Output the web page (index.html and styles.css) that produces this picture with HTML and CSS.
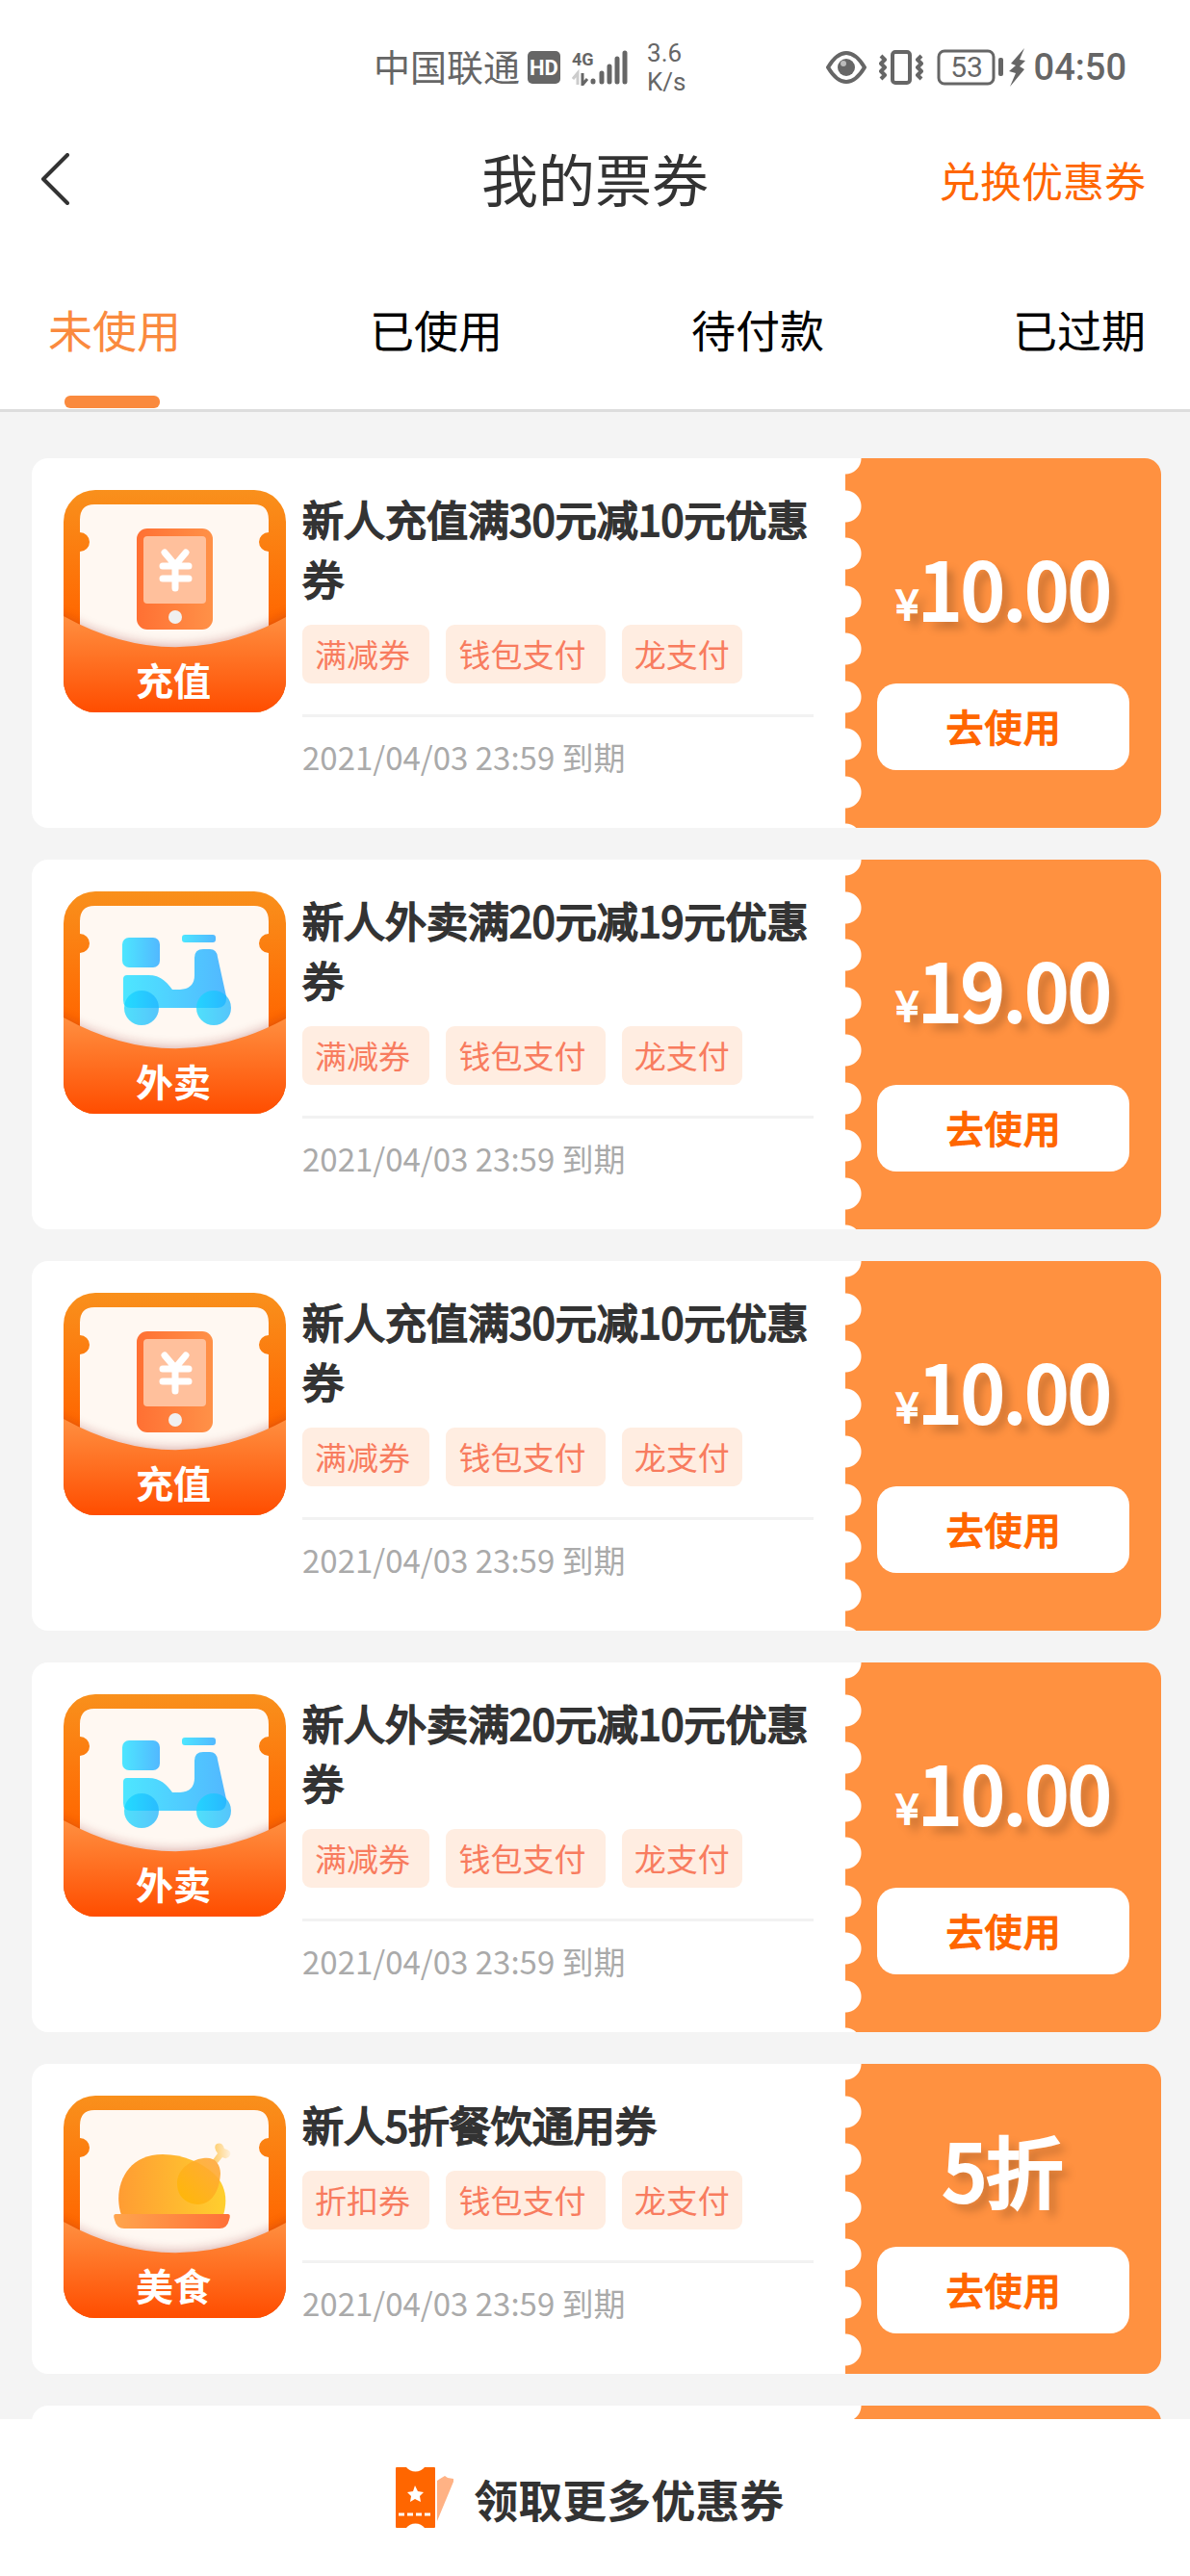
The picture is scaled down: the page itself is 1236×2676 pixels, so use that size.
FILE: index.html
```html
<!DOCTYPE html>
<html lang="zh-CN">
<head>
  <meta charset="UTF-8" />
  <meta name="viewport" content="width=device-width, initial-scale=1.0" />
  <title>我的票券</title>
  <link rel="stylesheet" href="styles.css">
</head>
<body>

<!-- Shared drawings for the coupon icons -->
<svg class="sprite" aria-hidden="true">
  <defs>
    <linearGradient id="frameFill" x1="0" y1="0" x2="0" y2="1">
      <stop offset="0" stop-color="#f9901c" />
      <stop offset="0.6" stop-color="#ff6600" />
    </linearGradient>
    <linearGradient id="pocketFill" x1="0" y1="0" x2="0" y2="1">
      <stop offset="0" stop-color="#ff8f40" />
      <stop offset="1" stop-color="#ff4d00" />
    </linearGradient>
    <linearGradient id="phoneFill" x1="0" y1="0" x2="1" y2="0">
      <stop offset="0" stop-color="#ff7033" />
      <stop offset="1" stop-color="#ff9148" />
    </linearGradient>
    <linearGradient id="bikeFill" x1="0" y1="0" x2="1" y2="0">
      <stop offset="0" stop-color="#4de6ff" />
      <stop offset="1" stop-color="#52b8ff" />
    </linearGradient>
    <linearGradient id="wheelFill" x1="0" y1="0" x2="1" y2="0">
      <stop offset="0" stop-color="#16d8ff" />
      <stop offset="1" stop-color="#1eb4ff" />
    </linearGradient>
    <linearGradient id="meatFill" x1="0" y1="0" x2="1" y2="0">
      <stop offset="0" stop-color="#ff9c33" />
      <stop offset="1" stop-color="#ffcf2e" />
    </linearGradient>
    <linearGradient id="legFill" x1="0" y1="1" x2="1" y2="0">
      <stop offset="0" stop-color="#ffb800" />
      <stop offset="1" stop-color="#ffa640" />
    </linearGradient>
    <linearGradient id="boneFill" x1="0" y1="0" x2="1" y2="0">
      <stop offset="0" stop-color="#ffcc66" />
      <stop offset="1" stop-color="#fff0dc" />
    </linearGradient>
    <linearGradient id="plateFill" x1="0" y1="0" x2="1" y2="0">
      <stop offset="0" stop-color="#ffa54d" />
      <stop offset="1" stop-color="#ff7038" />
    </linearGradient>
    <clipPath id="badgeClip"><rect width="231" height="231" rx="33" /></clipPath>
    <filter id="pocketShadow" x="-20%" y="-30%" width="140%" height="160%">
      <feGaussianBlur stdDeviation="6" />
    </filter>
  </defs>

  <symbol id="badgeBack" viewBox="0 0 231 231">
    <g clip-path="url(#badgeClip)">
      <rect width="231" height="231" fill="url(#frameFill)" />
      <path fill="#fff8f2" d="M32 15H198Q213 15 213 31V44A10 10 0 0 0 213 64V180H17V64A10 10 0 0 0 17 44V31Q17 15 32 15Z" />
    </g>
  </symbol>
  <symbol id="badgePocket" viewBox="0 0 231 231">
    <g clip-path="url(#badgeClip)">
      <path fill="#8c1a1a" opacity="0.35" filter="url(#pocketShadow)" d="M-10 127Q115 197 241 127V231H-10Z" />
      <path fill="url(#pocketFill)" d="M0 131Q115 195 231 132V231H0Z" />
    </g>
  </symbol>

  <symbol id="phone" viewBox="0 0 231 231">
    <rect x="76" y="40" width="79" height="105" rx="11" fill="url(#phoneFill)" />
    <rect x="83" y="48" width="65" height="70" rx="4" fill="#ffc09c" />
    <path fill="none" stroke="#fff" stroke-width="7" stroke-linecap="round" stroke-linejoin="round" d="M105 65L116 78L127 65M116 78V102M103 79H130M103 92H130" />
    <circle cx="116" cy="132" r="7" fill="#f0f0f0" />
  </symbol>

  <symbol id="bike" viewBox="0 0 231 231">
    <rect x="61" y="48" width="39" height="31" rx="7" fill="url(#bikeFill)" />
    <rect x="123" y="45" width="35" height="8" rx="3" fill="url(#bikeFill)" />
    <path fill="url(#bikeFill)" d="M66 87H88C101 87 107 94 113 102H121Q136 101 136 87V69Q136 60 145 60H152Q159 60 160 68L169 109Q170 121 160 121H70Q62 121 62 113V91Q62 87 66 87Z" />
    <g fill="url(#wheelFill)" opacity="0.75">
      <circle cx="81" cy="121" r="18" />
      <circle cx="156" cy="121" r="18" />
    </g>
  </symbol>

  <symbol id="chicken" viewBox="0 0 231 231">
    <path fill="url(#boneFill)" d="M155 67L160 60Q155 53 159 50Q165 48 167 55Q175 57 173 62Q170 67 165 64L160 70Z" />
    <path fill="url(#meatFill)" d="M60 124C51 98 63 61 103 61C125 61 144 70 156 81C168 92 171 107 166 124Z" />
    <path fill="url(#legFill)" opacity="0.9" d="M145 65C157 63 163 71 163 81C162 99 154 113 139 113C126 112 118 104 118 91C118 77 131 67 145 65Z" />
    <path fill="url(#plateFill)" d="M54 123H171Q174 123 172 129Q170 138 162 138H63Q55 138 53 129Q51 123 54 123Z" />
  </symbol>
</svg>

<div class="status-bar">
  <div class="status-group status-left">
    <span class="carrier">中国联通</span>
    <svg class="hd-icon" width="34" height="34" viewBox="0 0 34 34">
      <rect width="34" height="34" rx="5" fill="#666" />
      <text x="17" y="25" text-anchor="middle" class="hd-text">HD</text>
    </svg>
    <svg class="signal-icon" width="58" height="38" viewBox="0 0 58 38">
      <text x="0" y="17" class="net-text">4G</text>
      <path d="M1 31L6 25V37" fill="none" stroke="#ccc" stroke-width="3" />
      <path d="M11 25V37L16 31" fill="none" stroke="#666" stroke-width="3" />
      <g stroke="#666" stroke-width="5" stroke-linecap="round">
        <path d="M22 33V34M31 25V34M39 18V34M47 10V34M55 4V34" />
      </g>
    </svg>
    <span class="net-speed">3.6<br>K/s</span>
  </div>
  <div class="status-group status-right">
    <svg width="42" height="34" viewBox="0 0 42 34">
      <path d="M2 17Q11 2 21 2T40 17Q31 32 21 32T2 17Z" fill="none" stroke="#666" stroke-width="4" stroke-linejoin="round" />
      <circle cx="21" cy="17" r="9" fill="#666" />
      <circle cx="18" cy="13" r="3" fill="#bbb" />
    </svg>
    <svg class="vibrate-icon" width="46" height="38" viewBox="0 0 46 38">
      <rect x="14" y="3" width="18" height="32" rx="3" fill="none" stroke="#666" stroke-width="4" />
      <path d="M2 7L6 11L2 15L6 19L2 23L6 27L2 31M44 7L40 11L44 15L40 19L44 23L40 27L44 31" fill="none" stroke="#666" stroke-width="4" stroke-linejoin="round" />
    </svg>
    <svg class="battery-icon" width="70" height="38" viewBox="0 0 70 38">
      <rect x="2" y="2" width="57" height="34" rx="6" fill="none" stroke="#666" stroke-width="3" />
      <rect x="64" y="9" width="5" height="19" rx="2" fill="#666" />
      <text x="31" y="29" text-anchor="middle" class="battery-text">53</text>
    </svg>
    <svg class="bolt-icon" width="18" height="40" viewBox="0 0 18 40">
      <path d="M16 0L2 16L7 18L0 24L7 26L1 40L16 22L11 19L17 13L11 12Z" fill="#666" />
    </svg>
    <span class="clock">04:50</span>
  </div>
</div>

<header class="header">
  <button class="back-btn" aria-label="返回">
    <svg width="31" height="54" viewBox="0 0 31 54">
      <path d="M29 2L4 27L29 52" fill="none" stroke="#333" stroke-width="4" stroke-linecap="round" stroke-linejoin="round" />
    </svg>
  </button>
  <h1>我的票券</h1>
  <a class="exchange-link" href="#">兑换优惠券</a>
</header>

<nav class="tabs">
  <button class="tab active">未使用</button>
  <button class="tab">已使用</button>
  <button class="tab">待付款</button>
  <button class="tab">已过期</button>
</nav>

<main class="coupon-list">
  <article class="coupon">
    <div class="coupon-info">
      <svg class="coupon-icon" viewBox="0 0 231 231">
        <use href="#badgeBack" /><use href="#phone" /><use href="#badgePocket" />
        <text x="114" y="213" class="icon-label">充值</text>
      </svg>
      <div class="coupon-text">
        <h2>新人充值满30元减10元优惠券</h2>
        <div class="tags"><span>满减券&nbsp;</span><span>钱包支付&nbsp;</span><span>龙支付</span></div>
        <p class="expire">2021/04/03 23:59 到期</p>
      </div>
    </div>
    <div class="coupon-value">
      <div class="price"><small>¥</small>10.00</div>
      <button class="use-btn">去使用</button>
    </div>
  </article>

  <article class="coupon">
    <div class="coupon-info">
      <svg class="coupon-icon" viewBox="0 0 231 231">
        <use href="#badgeBack" /><use href="#bike" /><use href="#badgePocket" />
        <text x="114" y="213" class="icon-label">外卖</text>
      </svg>
      <div class="coupon-text">
        <h2>新人外卖满20元减19元优惠券</h2>
        <div class="tags"><span>满减券&nbsp;</span><span>钱包支付&nbsp;</span><span>龙支付</span></div>
        <p class="expire">2021/04/03 23:59 到期</p>
      </div>
    </div>
    <div class="coupon-value">
      <div class="price"><small>¥</small>19.00</div>
      <button class="use-btn">去使用</button>
    </div>
  </article>

  <article class="coupon">
    <div class="coupon-info">
      <svg class="coupon-icon" viewBox="0 0 231 231">
        <use href="#badgeBack" /><use href="#phone" /><use href="#badgePocket" />
        <text x="114" y="213" class="icon-label">充值</text>
      </svg>
      <div class="coupon-text">
        <h2>新人充值满30元减10元优惠券</h2>
        <div class="tags"><span>满减券&nbsp;</span><span>钱包支付&nbsp;</span><span>龙支付</span></div>
        <p class="expire">2021/04/03 23:59 到期</p>
      </div>
    </div>
    <div class="coupon-value">
      <div class="price"><small>¥</small>10.00</div>
      <button class="use-btn">去使用</button>
    </div>
  </article>

  <article class="coupon">
    <div class="coupon-info">
      <svg class="coupon-icon" viewBox="0 0 231 231">
        <use href="#badgeBack" /><use href="#bike" /><use href="#badgePocket" />
        <text x="114" y="213" class="icon-label">外卖</text>
      </svg>
      <div class="coupon-text">
        <h2>新人外卖满20元减10元优惠券</h2>
        <div class="tags"><span>满减券&nbsp;</span><span>钱包支付&nbsp;</span><span>龙支付</span></div>
        <p class="expire">2021/04/03 23:59 到期</p>
      </div>
    </div>
    <div class="coupon-value">
      <div class="price"><small>¥</small>10.00</div>
      <button class="use-btn">去使用</button>
    </div>
  </article>

  <article class="coupon">
    <div class="coupon-info">
      <svg class="coupon-icon" viewBox="0 0 231 231">
        <use href="#badgeBack" /><use href="#chicken" /><use href="#badgePocket" />
        <text x="114" y="213" class="icon-label">美食</text>
      </svg>
      <div class="coupon-text">
        <h2>新人5折餐饮通用券</h2>
        <div class="tags"><span>折扣券&nbsp;</span><span>钱包支付&nbsp;</span><span>龙支付</span></div>
        <p class="expire">2021/04/03 23:59 到期</p>
      </div>
    </div>
    <div class="coupon-value">
      <div class="price discount">5折</div>
      <button class="use-btn">去使用</button>
    </div>
  </article>

  <!-- next coupon, still below the fold -->
  <article class="coupon">
    <div class="coupon-info"></div>
    <div class="coupon-value"></div>
  </article>
</main>

<footer class="footer">
  <a class="more-link" href="#">
    <svg width="61" height="64" viewBox="0 0 61 64">
      <path d="M43 14L46 12L51 9L54 11L60 12L60 15L43 56Z" fill="#ffb285" />
      <path d="M1 0H11A11 9 0 0 0 30 0H40Q41 0 41 1V62Q41 63 40 63H30A11 9 0 0 0 11 63H1Q0 63 0 62V1Q0 0 1 0Z" fill="#ff6600" />
      <path d="M20 19L23 25L29 26L25 30L26 36L20 33L15 36L16 30L12 26L18 25Z" fill="#fff" />
      <path d="M3 49H37" stroke="#fff" stroke-width="3" stroke-dasharray="6 3" />
    </svg>
    <span>领取更多优惠券&nbsp;</span>
  </a>
</footer>

</body>
</html>
```
FILE: styles.css
```css
:root {
  --orange: #ff9140;
  --orange-deep: #ff6600;
  --text-color: #333333;
  --bg-color: #f4f4f4;
  --status-color: #666666;
}

* {
  box-sizing: border-box;
}

body {
  display: flex;
  flex-direction: column;
  height: 100vh;
  margin: 0;
  background-color: var(--bg-color);
  color: var(--text-color);
  font-family: "Noto Sans CJK SC", sans-serif;
}

button {
  padding: 0;
  border: none;
  background: none;
  font-family: inherit;
  cursor: pointer;
}

a {
  text-decoration: none;
}

svg {
  display: block;
  flex: none;
}

.sprite {
  position: absolute;
  width: 0;
  height: 0;
}

/* Phone status bar */
.status-bar {
  display: flex;
  flex: none;
  justify-content: space-between;
  height: 140px;
  padding: 0 66px 0 388px;
  background-color: #fff;
  color: var(--status-color);
}

.status-group {
  display: flex;
  align-items: center;
}

.carrier {
  padding-bottom: 6px;
  font-size: 38px;
}

.hd-icon {
  margin-left: 8px;
}

.hd-text {
  fill: #fff;
  font: bold 22px Roboto, sans-serif;
}

.signal-icon {
  margin-left: 12px;
}

.net-text {
  fill: var(--status-color);
  font: bold 18px Roboto, sans-serif;
}

.net-speed {
  margin-left: 20px;
  font: 26px/30px Roboto, sans-serif;
}

.vibrate-icon {
  margin-left: 13px;
}

.battery-icon {
  margin-left: 14px;
}

.battery-text {
  fill: var(--status-color);
  font: 30px Roboto, sans-serif;
}

.bolt-icon {
  margin-left: 5px;
}

.clock {
  margin-left: 8px;
  font: 500 38px/40px Roboto, sans-serif;
}

/* Title bar */
.header {
  display: grid;
  flex: none;
  grid-template-columns: 1fr auto 1fr;
  align-items: center;
  height: 92px;
  padding: 0 46px;
  background-color: #fff;
}

.back-btn {
  justify-self: start;
  margin-left: -5px;
}

.header h1 {
  margin: 0;
  padding-bottom: 2px;
  font-size: 59px;
  font-weight: 400;
  line-height: 84px;
}

.exchange-link {
  justify-self: end;
  color: var(--orange-deep);
  font-size: 43px;
}

/* Tabs */
.tabs {
  display: flex;
  flex: none;
  justify-content: space-between;
  padding: 66px 46px 0 50px;
  border-bottom: 3px solid #dddddd;
  background-color: #fff;
}

.tab {
  display: flex;
  flex-direction: column;
  justify-content: space-between;
  align-items: center;
  height: 127px;
  padding-top: 9px;
  color: #000;
  font-size: 46px;
  line-height: 68px;
}

.tab::after {
  content: "";
  width: 99px;
  height: 13px;
  margin: 0 6px 1px 0;
  border-radius: 6px;
}

.tab.active {
  color: #fa8a3e;
}

.tab.active::after {
  background-color: #fa8a3e;
}

/* Coupons */
.coupon-list {
  display: flex;
  flex: 1;
  flex-direction: column;
  gap: 33px;
  min-height: 0;
  padding: 48px 30px 48px 33px;
  overflow-y: auto;
  scrollbar-width: none;
}

.coupon {
  display: flex;
  flex: none;
  min-height: 322px;
  border-radius: 17px;
  overflow: hidden;
}

.coupon-info {
  display: flex;
  flex: 1;
  gap: 17px;
  padding: 33px;
  background-color: #fff;
}

.coupon-icon {
  width: 231px;
  height: 231px;
}

.icon-label {
  fill: #fff;
  font-size: 39px;
  font-weight: 700;
  text-anchor: middle;
}

.coupon-text {
  flex: 1;
}

.coupon-text h2 {
  margin: -2px 0 0;
  font-size: 43px;
  font-weight: 400;
  line-height: 62px;
  -webkit-text-stroke: 2px currentColor;
}

.tags {
  display: flex;
  gap: 17px;
  margin-top: 18px;
}

.tags span {
  padding: 0 13px;
  border-radius: 9px;
  background-color: #ffede1;
  color: #f87c5f;
  font-size: 33px;
  line-height: 61px;
}

.expire {
  margin: 32px 0 0;
  padding: 17px 0;
  border-top: 3px solid #f2f2f2;
  color: #aaaaaa;
  font-size: 33px;
  line-height: 48px;
}

/* Orange stub with a punched left edge */
.coupon-value {
  display: flex;
  flex-direction: column;
  justify-content: center;
  width: 328px;
  padding: 0 33px;
  background:
    radial-gradient(circle at 0 0, #fff 16px, transparent 17px) 0 0 / 17px 99px repeat-y,
    radial-gradient(circle at 0 50px, #fff 16px, transparent 17px) 0 0 / 17px 99px repeat-y,
    radial-gradient(circle at 0 99px, #fff 16px, transparent 17px) 0 0 / 17px 99px repeat-y,
    var(--orange);
}

.price {
  margin-bottom: 28px;
  color: #fff;
  font-size: 80px;
  font-weight: 400;
  line-height: 146px;
  text-align: center;
  text-shadow: 8px 8px 10px rgba(0, 0, 0, 0.25);
  -webkit-text-stroke: 4px currentColor;
}

.price small {
  font-size: 43px;
  line-height: 43px;
  -webkit-text-stroke-width: 2px;
}

.price.discount {
  margin-bottom: 16px;
  line-height: 132px;
}

.use-btn {
  height: 90px;
  padding-bottom: 2px;
  border-radius: 20px;
  background-color: #fff;
  color: var(--orange-deep);
  font-size: 40px;
  font-weight: 700;
}

/* Bottom bar */
.footer {
  display: flex;
  flex: none;
  align-items: center;
  justify-content: center;
  height: 163px;
  background-color: #fff;
}

.more-link {
  display: flex;
  align-items: center;
  gap: 20px;
  color: var(--text-color);
  font-size: 46px;
  font-weight: 700;
}
```
